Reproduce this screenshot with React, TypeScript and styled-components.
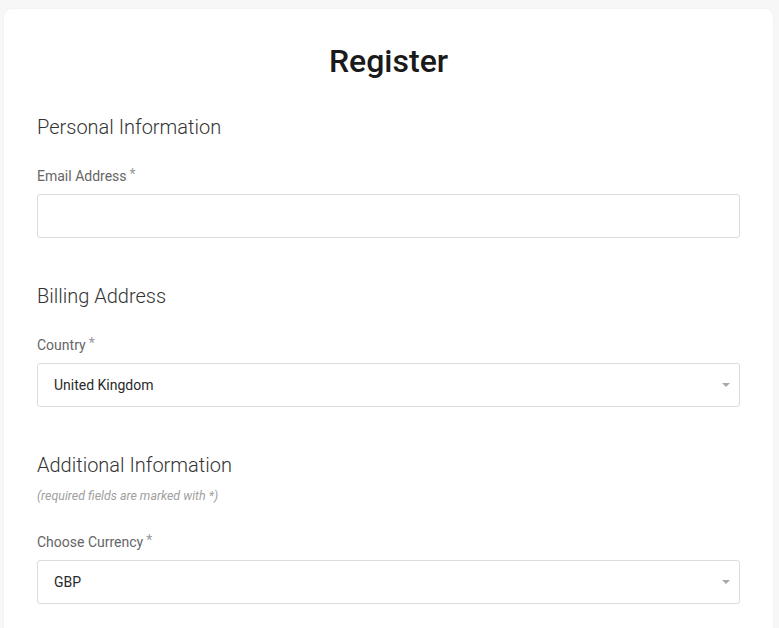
import React from "react";
import styled, { createGlobalStyle } from "styled-components";

const Global = createGlobalStyle`
  html, body { margin: 0; padding: 0; background: #f7f7f7; }
  body { font-family: Roboto, "Noto Sans", Arial, sans-serif; }
  * { box-sizing: border-box; }
`;

const Page = styled.div`
  padding: 9px 6px 0 4px;
  height: 628px;
  overflow: hidden;
`;

const Card = styled.div`
  background: #fff;
  border-radius: 8px;
  box-shadow: 0 0 3px rgba(0, 0, 0, 0.04);
  padding: 33px 33px 40px 33px;
  min-height: 700px;
`;

const Title = styled.h1`
  margin: 0;
  font-size: 32px;
  line-height: 38px;
  font-weight: 500;
  color: #1a1a1a;
  text-align: center;
`;

const Section = styled.section<{ $top: number }>`
  margin-top: ${(p) => p.$top}px;
  display: flex;
  flex-direction: column;
`;

const Heading = styled.h2`
  margin: 0;
  font-size: 20px;
  line-height: 24px;
  font-weight: 300;
  color: #333;
`;

const Note = styled.p`
  margin: 11px 0 0;
  font-size: 12.4px;
  line-height: 16px;
  font-style: italic;
  color: #a0a0a0;
`;

const Field = styled.div<{ $top: number }>`
  margin-top: ${(p) => p.$top}px;
  display: flex;
  flex-direction: column;
  gap: 8px;
`;

const Label = styled.label`
  display: block;
  font-size: 14px;
  line-height: 20px;
  height: 20px;
  color: #666;
`;

const Req = styled.span`
  position: relative;
  top: -2px;
  margin-left: 3px;
  color: #999;
  font-size: 14px;
`;

const Input = styled.input`
  width: 100%;
  height: 44px;
  border: 1px solid #dcdcdc;
  border-radius: 3px;
  padding: 0 16px;
  font-family: inherit;
  font-size: 14px;
  color: #333;
  background: #fff;
  outline: none;
`;

const SelectBox = styled.div`
  height: 44px;
  border: 1px solid #dcdcdc;
  border-radius: 3px;
  padding: 0 9px 0 16px;
  display: flex;
  align-items: center;
  justify-content: space-between;
  font-size: 14px;
  color: #2a2a2a;
  background: #fff;
`;

const Arrow = styled.span`
  width: 0;
  height: 0;
  border-left: 4px solid transparent;
  border-right: 4px solid transparent;
  border-top: 4px solid #a8a8a8;
`;

const Select = ({ value }: { value: string }) => (
  <SelectBox>
    <span>{value}</span>
    <Arrow />
  </SelectBox>
);

export default function App() {
  return (
    <>
      <Global />
      <Page>
        <Card>
          <Title>Register</Title>
          <Section $top={35}>
            <Heading>Personal Information</Heading>
            <Field $top={27}>
              <Label>
                Email Address<Req>*</Req>
              </Label>
              <Input type="email" />
            </Field>
          </Section>
          <Section $top={46}>
            <Heading>Billing Address</Heading>
            <Field $top={27}>
              <Label>
                Country<Req>*</Req>
              </Label>
              <Select value="United Kingdom" />
            </Field>
          </Section>
          <Section $top={46}>
            <Heading>Additional Information</Heading>
            <Note>(required fields are marked with *)</Note>
            <Field $top={28}>
              <Label>
                Choose Currency<Req>*</Req>
              </Label>
              <Select value="GBP" />
            </Field>
          </Section>
        </Card>
      </Page>
    </>
  );
}
